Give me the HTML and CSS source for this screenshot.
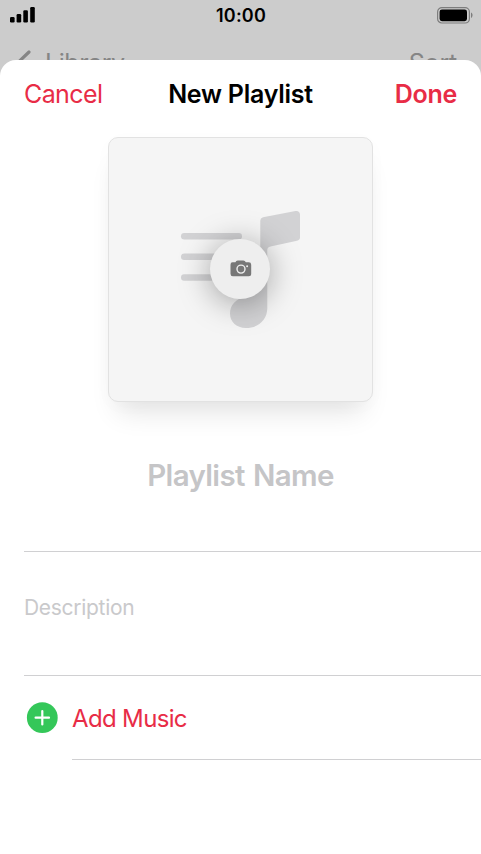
FILE: index.html
```
<!DOCTYPE html>
<html lang="en">
<head>
<meta charset="utf-8">
<title>New Playlist</title>
<link rel="stylesheet" href="styles.css">
</head>
<body>
<div class="backdrop">
  <div class="status">
    <svg class="signal" width="26" height="17" viewBox="0 0 26 17"><rect x="0" y="10" width="4.600" height="5.400" rx="1.200"/><rect x="6.600" y="7" width="4.600" height="8.400" rx="1.200"/><rect x="13.300" y="3.300" width="4.600" height="12.100" rx="1.200"/><rect x="20.200" y="0" width="4.600" height="15.400" rx="1.200"/></svg>
    <span class="time">10:00</span>
    <svg class="battery" width="36" height="17" viewBox="0 0 36 17"><rect x=".6" y=".6" width="31.800" height="15.400" rx="4.300" fill="none" stroke="#7d7d7d" stroke-width="1.200"/><rect x="2.600" y="2.400" width="27.400" height="11.800" rx="2.400"/><path d="M34 5.600c2 .8 2 4.600 0 5.400z" fill="#7d7d7d"/></svg>
  </div>
  <div class="nav">
    <svg class="back" width="16" height="26" viewBox="0 0 16 26"><path d="M13 2 1.500 13 13 24" fill="none" stroke="#858585" stroke-width="3.200" stroke-linecap="round" stroke-linejoin="round"/></svg>
    <span class="library">Library</span>
    <span class="sort">Sort</span>
  </div>
</div>
<main class="sheet">
  <header class="bar">
    <span class="cancel">Cancel</span>
    <h1 class="title">New Playlist</h1>
    <span class="done">Done</span>
  </header>
  <div class="cover">
    <svg class="art" width="120" height="120" viewBox="0 0 120 120" fill="#d2d2d4"><rect x="1" y="23" width="61" height="6.400" rx="3.200"/><rect x="1" y="43.600" width="61" height="6.400" rx="3.200"/><rect x="1" y="64.300" width="61" height="6.400" rx="3.200"/><path d="M80.300 10.500Q80.300 8 83 7.300L115.500 1Q119.700.5 120 4.500V27.500Q120 30 117 30.700L90.500 36.600Q87.300 37.400 87.300 40V98C87.300 110 78 118 66 118C56 118 50 111.500 50 103.500C50 95 56 88.500 65 87L72 84Q80.300 80 80.300 70Z"/></svg>
    <div class="camera">
      <svg width="22" height="17" viewBox="0 0 22 17"><path fill="#777" d="M2.500 2.300H5.400L6.300 1.100Q6.900.4 7.900.4H13.300Q14.200.4 14.800 1.100L15.800 2.300H18.700Q21.200 2.300 21.200 4.700V13.800Q21.200 16.300 18.700 16.300H2.800Q.5 16.300.5 13.800V4.700Q.5 2.300 2.500 2.300Z"/><circle cx="11" cy="9.100" r="4" fill="none" stroke="#eee" stroke-width="1.400"/><circle cx="17.100" cy="6.200" r="1" fill="#eee"/></svg>
    </div>
  </div>
  <div class="name"><span>Playlist Name</span></div>
  <div class="description"><span>Description</span></div>
  <div class="add">
    <svg class="plus" width="32" height="32" viewBox="0 0 32 32"><circle cx="16.300" cy="15.700" r="15.400" fill="#34c759"/><path d="M16.300 9V22.400M9.600 15.700H23" stroke="#fff" stroke-width="2.200" stroke-linecap="round"/></svg>
    <div class="add-row"><span>Add Music</span></div>
  </div>
</main>
</body>
</html>
```
FILE: styles.css
```
* { box-sizing: border-box; }
body {
  margin: 0;
  height: 854px;
  overflow: hidden;
  background: #ccc;
  color: #000;
  font-family: Inter, "Liberation Sans", sans-serif;
  display: flex;
  flex-direction: column;
}
svg { display: block; flex: none; }
span, h1 { white-space: nowrap; }
.backdrop { height: 60px; flex: none; overflow: hidden; }
.status {
  display: grid;
  grid-template-columns: 1fr auto 1fr;
  align-items: center;
  height: 32px;
  padding: 0 8px 2px 10px;
}
.time { font-size: 18px; font-weight: 600; letter-spacing: .2px; line-height: 24px; padding: 2px 1px 0 0; }
.battery { justify-self: end; }
.nav {
  display: flex;
  align-items: center;
  height: 62px;
  padding: 0 24px 0 16px;
  color: #858585;
  font-size: 25px;
}
.library { margin-left: 13px; letter-spacing: -.45px; }
.sort { margin-left: auto; letter-spacing: -.2px; }
.sheet {
  flex: 1;
  background: #fff;
  border-radius: 16px 16px 0 0;
  display: flex;
  flex-direction: column;
}
.bar {
  display: grid;
  grid-template-columns: 1fr auto 1fr;
  align-items: center;
  height: 67px;
  padding: 0 24px;
  font-size: 25px;
}
.cancel { color: #e82c46; letter-spacing: -.6px; }
.title { margin: 0; font-size: 25px; font-weight: 600; letter-spacing: -.25px; }
.done { color: #e82c46; font-weight: 600; letter-spacing: -.3px; justify-self: end; }
.cover {
  width: 265px;
  height: 265px;
  margin: 10px auto 0;
  padding: 0 2px 2px 0;
  border: 1px solid #e2e2e2;
  border-radius: 10px;
  background: #f5f5f5;
  box-shadow: 0 20px 26px -10px rgba(0,0,0,.11), 0 4px 20px rgba(0,0,0,.02);
  display: grid;
  place-items: center;
}
.art, .camera { grid-area: 1 / 1; }
.art { margin-top: 2px; }
.camera {
  width: 60px;
  height: 60px;
  margin-left: 1px;
  padding-left: 1px;
  border-radius: 50%;
  background: #eee;
  box-shadow: 0 4px 32px rgba(0,0,0,.36);
  display: grid;
  place-items: center;
}
.name {
  height: 150px;
  margin-left: 24px;
  padding: 53px 24px 0 0;
  border-bottom: 1px solid #d0d0d2;
  color: #c5c5c7;
  font-size: 29.5px;
  font-weight: 600;
  letter-spacing: -.65px;
  word-spacing: 1.5px;
  line-height: 40px;
  text-align: center;
}
.description {
  height: 124px;
  margin-left: 24px;
  padding-top: 41px;
  border-bottom: 1px solid #d0d0d2;
  color: #c9c9cb;
  font-size: 21px;
  letter-spacing: -.3px;
  line-height: 30px;
}
.add { display: flex; height: 84px; padding-left: 26px; }
.plus { margin-top: 26px; }
.add-row {
  flex: 1;
  margin-left: 14px;
  padding-top: 27px;
  border-bottom: 1px solid #d0d0d2;
  color: #e82c46;
  font-size: 24px;
  letter-spacing: -.65px;
  line-height: 32px;
}
```
